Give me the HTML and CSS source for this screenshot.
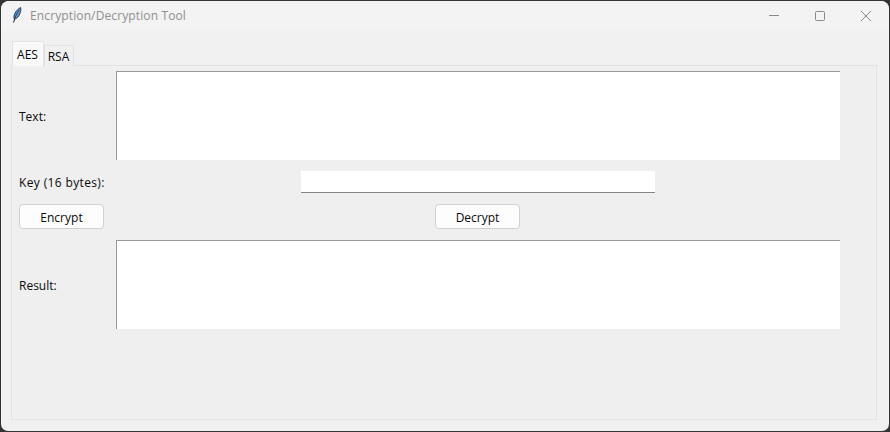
FILE: index.html
```html
<!DOCTYPE html>
<html lang="en">
<head>
<meta charset="utf-8">
<title>Encryption/Decryption Tool</title>
<link rel="stylesheet" href="styles.css">
</head>
<body>
<div class="window">
  <header class="titlebar">
    <svg class="app-icon" width="16" height="16" viewBox="0 0 16 16">
      <path d="M4.5 15.5 L6 11" stroke="#222" stroke-width="1" fill="none"/>
      <path d="M5.4 12.2 C4 9.5 5.8 3.8 11.6 0.5 C12.2 3 11.4 6.4 9.8 8.8 C8.6 10.6 7 12 5.4 12.2 Z" fill="#5f9be0" stroke="#1c2a3a" stroke-width="0.9"/>
      <path d="M6 11 C7 8 8.4 5.4 10.4 3" stroke="#16263c" stroke-width="0.8" fill="none"/>
    </svg>
    <span class="title">Encryption/Decryption Tool</span>
    <div class="controls">
      <button class="ctl" aria-label="Minimize"><svg width="12" height="12" viewBox="0 0 12 12"><path d="M1 5.5H11" stroke="#8a8a8a" fill="none"/></svg></button>
      <button class="ctl" aria-label="Maximize"><svg width="12" height="12" viewBox="0 0 12 12"><rect x="1.5" y="1.5" width="9" height="9" rx="1" stroke="#8a8a8a" fill="none"/></svg></button>
      <button class="ctl" aria-label="Close"><svg width="12" height="12" viewBox="0 0 12 12"><path d="M1 1L11 11M11 1L1 11" stroke="#8a8a8a" fill="none"/></svg></button>
    </div>
  </header>
  <main class="client">
    <div class="tabs">
      <div class="tab tab-active">AES</div>
      <div class="tab">RSA</div>
    </div>
    <section class="panel">
      <label class="lbl">Text:</label>
      <div class="box"></div>
      <label class="lbl lbl-key">Key (16 bytes):</label>
      <div class="entry"></div>
      <button class="btn">Encrypt</button>
      <button class="btn btn-center">Decrypt</button>
      <label class="lbl">Result:</label>
      <div class="box"></div>
    </section>
  </main>
</div>
</body>
</html>
```
FILE: styles.css
```css
* { box-sizing: border-box; }
html, body { margin: 0; height: 100%; }
body {
  background: #333;
  padding: 1px;
  font-family: "Open Sans", "Noto Sans", sans-serif;
  font-size: 12px;
  color: #0a0a0a;
  overflow: hidden;
}
.window {
  height: 100%;
  background: #f0f0f0;
  border-radius: 8px 8px 7px 7px;
  display: flex;
  flex-direction: column;
  overflow: hidden;
}
.titlebar {
  height: 30px;
  flex: none;
  background: #f3f3f3;
  display: flex;
  align-items: center;
  padding-left: 8px;
}
.app-icon { flex: none; margin-bottom: 2px; }
.title { margin-left: 5px; margin-bottom: 2px; color: #8f8f8f; letter-spacing: 0.12px; }
.controls { margin-left: auto; display: flex; }
.ctl {
  width: 46px;
  height: 30px;
  padding: 0;
  border: 0;
  background: none;
  display: flex;
  align-items: center;
  justify-content: center;
}
.client {
  flex: 1;
  display: flex;
  flex-direction: column;
  padding: 10px 12px 11px 10px;
}
.tabs { display: flex; align-items: flex-end; height: 25px; margin-bottom: -1px; padding-left: 1px; position: relative; z-index: 1; }
.tab {
  height: 21px;
  width: 30px;
  padding-right: 1px;
  background: #f0f0f0;
  border: 1px solid #e3e3e3;
  border-bottom: 0;
  display: flex;
  align-items: center;
  justify-content: center;
}
.tab-active { height: 25px; width: 32px; background: #f9f9f9; border-bottom: 0; }
.panel {
  flex: 1;
  border: 1px solid #e3e3e3;
  background: #efefef;
  padding: 5px 0 0 7px;
  display: grid;
  grid-template-columns: 97px 724px;
  grid-template-rows: 89px 22px 25px 89px;
  row-gap: 11px;
  align-content: start;
}
.lbl { align-self: center; padding-top: 2px; }
.lbl-key { padding-top: 0; letter-spacing: 0.36px; }
.box {
  background: #fff;
  border-top: 1px solid #999;
  border-left: 1px solid #999;
}
.entry {
  width: 354px;
  height: 22px;
  justify-self: center;
  background: #fff;
  border-bottom: 1px solid #858585;
}
.btn {
  width: 85px;
  height: 25px;
  padding: 1px 0 0;
  font: inherit;
  color: inherit;
  background: #fdfdfd;
  border: 1px solid #d0d0d0;
  border-radius: 4px;
}
.btn-center { justify-self: center; margin-right: 1px; }
```
